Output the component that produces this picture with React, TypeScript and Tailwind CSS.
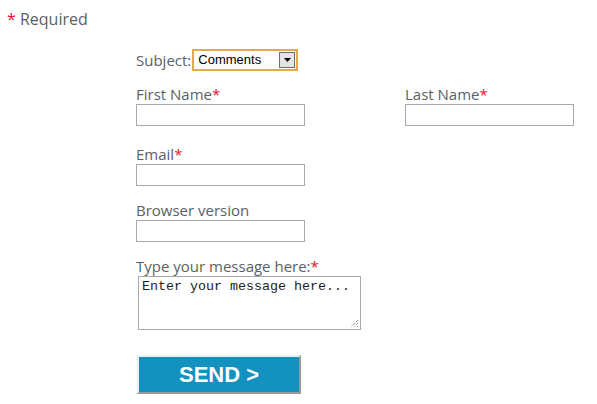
import React from "react";

const Star = () => <span className="text-[#e8112d]">*</span>;

const Input = ({ className = "" }: { className?: string }) => (
  <div className={"h-[22px] w-[169px] border border-[#a9a9a9] bg-white " + className} />
);

export default function App() {
  return (
    <div
      className="w-[597px] h-[404px] bg-white text-[#5a5f66] overflow-hidden"
      style={{ fontFamily: '"Open Sans", sans-serif' }}
    >
      <div className="pl-[7px] pt-[8px] text-[16px] leading-[22px]">
        <Star /> Required
      </div>
      <div className="ml-[136px] mt-[19px] text-[15px] leading-[20px]">
        <div className="flex items-center h-[22px]">
          <span>Subject:</span>
          <div className="ml-[1px] flex items-center h-[22px] w-[106px] border-2 border-[#e3aa4c] bg-white">
            <span
              className="flex-1 pl-[4px] text-[13px] text-black leading-[16px]"
              style={{ fontFamily: '"Liberation Sans", Arial, sans-serif' }}
            >
              Comments
            </span>
            <div className="mr-[1px] flex h-[16px] w-[16px] items-center justify-center border border-[#707070] bg-[#e4e4e4]">
              <svg width="7" height="4" viewBox="0 0 7 4">
                <path d="M0 0h7L3.5 4z" fill="#000" />
              </svg>
            </div>
          </div>
        </div>
        <div className="mt-[13px] flex">
          <div className="w-[269px]">
            <div>First Name<Star /></div>
            <Input />
          </div>
          <div>
            <div>Last Name<Star /></div>
            <Input />
          </div>
        </div>
        <div className="mt-[18px]">
          <div>Email<Star /></div>
          <Input />
        </div>
        <div className="mt-[14px]">
          <div>Browser version</div>
          <Input />
        </div>
        <div className="mt-[14px]">
          <div>Type your message here:<Star /></div>
          <div className="relative ml-[2px] h-[54px] w-[223px] border border-[#a9a9a9] bg-white">
            <div
              className="pl-[3px] pt-[2px] text-[13.33px] leading-[16px] text-[#222]"
              style={{ fontFamily: '"Liberation Mono", monospace' }}
            >
              Enter your message here...
            </div>
            <svg className="absolute right-[1px] bottom-[1px]" width="9" height="9" viewBox="0 0 9 9">
              <path d="M8 1L1 8M8 4L4 8M8 7L7 8" stroke="#666" strokeWidth="1" strokeDasharray="1 1" />
            </svg>
          </div>
        </div>
        <button
          className="mt-[25px] ml-[1px] flex h-[39px] w-[164px] items-center justify-center border-2 border-t-[#f0f0f0] border-l-[#f0f0f0] border-r-[#9a9a9a] border-b-[#9a9a9a] bg-[#1391bf] text-[22px] font-bold text-white"
          style={{ fontFamily: '"Liberation Sans", Arial, sans-serif' }}
        >
          SEND &gt;
        </button>
      </div>
    </div>
  );
}
